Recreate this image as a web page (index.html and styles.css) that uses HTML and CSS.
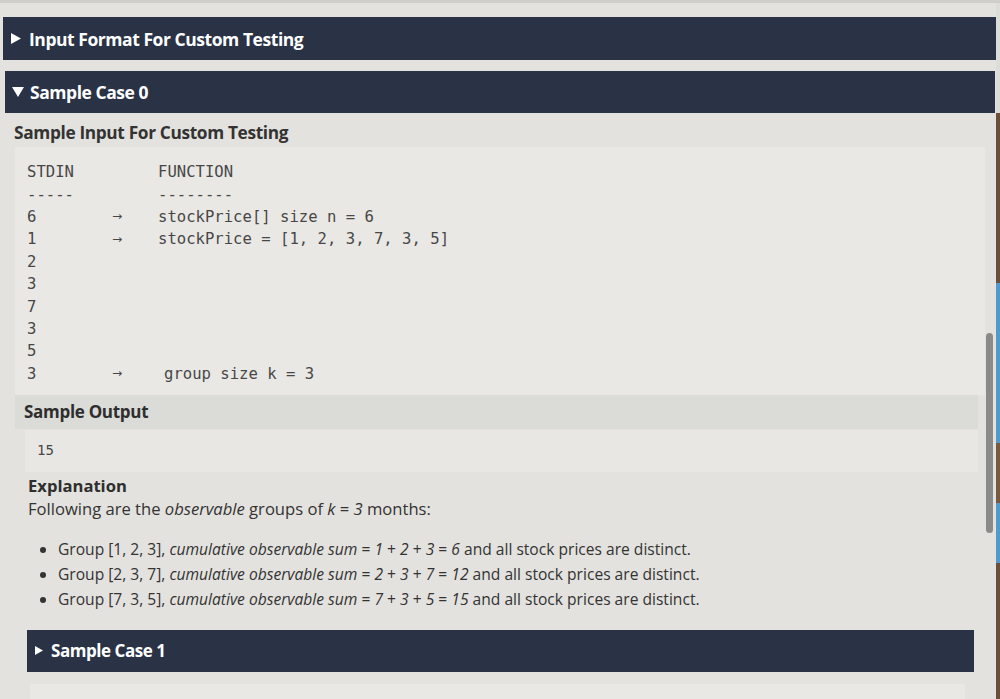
FILE: index.html
```html
<!DOCTYPE html>
<html>
<head>
<meta charset="utf-8">
<link rel="stylesheet" href="styles.css">
</head>
<body>
<div class="screen">
  <div class="page">
    <div class="bar bar-first"><svg class="tri" width="10" height="11" viewBox="0 0 10 11"><path d="M0 0 L10 5.5 L0 11 Z" fill="#fff"/></svg>Input Format For Custom Testing</div>
    <div class="bar bar-second"><svg class="tri-down" width="12" height="10" viewBox="0 0 12 10"><path d="M0 0 L12 0 L6 10 Z" fill="#fff"/></svg>Sample Case 0</div>
    <h3 class="sec-title">Sample Input For Custom Testing</h3>
    <div class="code">
      <div class="row"><span class="c1">STDIN</span><span class="c2"></span><span class="c3">FUNCTION</span></div>
      <div class="row"><span class="c1">-----</span><span class="c2"></span><span class="c3">--------</span></div>
      <div class="row"><span class="c1">6</span><span class="c2">&#8594;</span><span class="c3">stockPrice[] size n = 6</span></div>
      <div class="row"><span class="c1">1</span><span class="c2">&#8594;</span><span class="c3">stockPrice = [1, 2, 3, 7, 3, 5]</span></div>
      <div class="row"><span class="c1">2</span></div>
      <div class="row"><span class="c1">3</span></div>
      <div class="row"><span class="c1">7</span></div>
      <div class="row"><span class="c1">3</span></div>
      <div class="row"><span class="c1">5</span></div>
      <div class="row last"><span class="c1">3</span><span class="c2">&#8594;</span><span class="c3 shift">group size k = 3</span></div>
    </div>
    <div class="out-head">Sample Output</div>
    <div class="out-box">15</div>
    <div class="explain">
      <div class="ex-title">Explanation</div>
      <p class="ex-text">Following are the <em>observable</em> groups of <em>k</em> = <em>3</em> months:</p>
      <ul class="groups">
        <li>Group [1, 2, 3], <em>cumulative observable sum</em> = <em>1</em> + <em>2</em> + <em>3</em> = <em>6</em> and all stock prices are distinct.</li>
        <li>Group [2, 3, 7], <em>cumulative observable sum</em> = <em>2</em> + <em>3</em> + <em>7</em> = <em>12</em> and all stock prices are distinct.</li>
        <li>Group [7, 3, 5], <em>cumulative observable sum</em> = <em>7</em> + <em>3</em> + <em>5</em> = <em>15</em> and all stock prices are distinct.</li>
      </ul>
    </div>
    <div class="bar bar-third"><svg class="tri small" width="8" height="9" viewBox="0 0 8 9"><path d="M0 0 L8 4.5 L0 9 Z" fill="#fff"/></svg>Sample Case 1</div>
    <div class="next-box"></div>
  </div>
  <div class="side">
    <div class="scroll-thumb"></div>
  </div>
</div>
</body>
</html>
```
FILE: styles.css
```css
html, body {
  margin: 0;
  padding: 0;
  height: 699px;
  overflow: hidden;
}
body {
  background: #e3e2de;
  font-family: "Open Sans", "Noto Sans", sans-serif;
  color: #2c2c2c;
}
.screen {
  display: flex;
  height: 699px;
  border-top: 3px solid #cfcecb;
  box-sizing: border-box;
}
.page {
  flex: 1;
  padding-top: 14px;
  display: flex;
  flex-direction: column;
}
.side {
  width: 15px;
  position: relative;
  background:
    linear-gradient(90deg, #e3e2de 0 11px, transparent 11px),
    linear-gradient(180deg, #dcdcd8 0 110px, #6b4f3a 110px 280px, #4f9bd0 280px 440px, #7a5a3e 440px 500px, #4f9bd0 500px 560px, #6b4f3a 560px);
}
.scroll-thumb {
  position: absolute;
  left: 1px;
  top: 330px;
  width: 7px;
  height: 200px;
  border-radius: 4px;
  background: #8a8a88;
}
.bar {
  background: #2a3346;
  color: #fff;
  font-weight: 700;
  font-size: 17.5px;
  letter-spacing: -0.45px;
  height: 43px;
  display: flex;
  align-items: center;
  box-sizing: border-box;
  flex: none;
  position: relative;
  z-index: 1;
}
.bar-first {
  margin-left: 3px;
  margin-right: -11px;
  padding-left: 8px;
}
.bar-second {
  margin-top: 11px;
  margin-left: 5px;
  margin-right: -10px;
  padding-left: 7px;
  height: 42px;
}
.bar-third {
  margin-top: 18px;
  margin-left: 27px;
  margin-right: 11px;
  height: 42px;
  padding-left: 8px;
  font-size: 17px;
}
.tri {
  margin-right: 8px;
  flex: none;
}
.tri.small {
  margin-right: 8px;
}
.tri-down {
  margin-right: 6px;
  flex: none;
}
.sec-title {
  margin: 8px 0 0 14px;
  font-size: 17.3px;
  font-weight: 700;
  letter-spacing: -0.35px;
  color: #333;
}
.code {
  margin: 3px 0 0 15px;
  background: #e9e8e4;
  padding: 14px 0 10px 12px;
  font-family: "DejaVu Sans Mono", monospace;
  font-size: 15.6px;
  color: #474747;
}
.row {
  display: flex;
  height: 22.4px;
  align-items: center;
}
.c1 { width: 85px; }
.c2 {
  width: 46px;
  font-family: "DejaVu Sans", sans-serif;
  font-size: 11px;
  line-height: 1;
  transform: scale(1.1, 1);
  transform-origin: left center;
}
.c3 { white-space: pre; }
.c3.shift { margin-left: 6px; }
.out-head {
  margin-left: 15px;
  margin-right: 7px;
  background: #dbdbd8;
  padding: 5px 0 6px 9px;
  font-size: 17px;
  font-weight: 700;
  letter-spacing: -0.3px;
  color: #2e2e2e;
}
.out-box {
  margin-left: 25px;
  margin-right: 7px;
  margin-top: 1px;
  background: #e8e7e3;
  padding: 12px 0 14px 12px;
  font-family: "DejaVu Sans Mono", monospace;
  font-size: 14px;
  color: #474747;
}
.explain {
  margin-left: 28px;
  padding-top: 2px;
}
.ex-title {
  font-size: 16.6px;
  font-weight: 700;
  color: #2e2e2e;
}
.ex-text {
  margin: 0;
  font-size: 16.6px;
  color: #333;
}
.groups {
  margin: 17px 0 0 0;
  padding-left: 30px;
  font-size: 15.6px;
  color: #333;
}
.groups li {
  line-height: 25px;
}
.next-box {
  margin: 12px 20px 0 30px;
  height: 20px;
  background: #e9e8e5;
}
```
